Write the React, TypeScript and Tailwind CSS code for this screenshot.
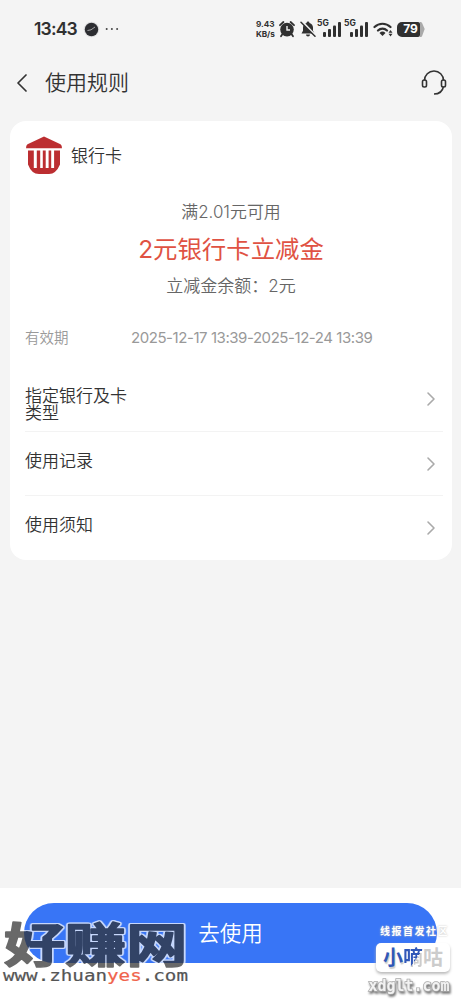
import { ChevronLeft, ChevronRight } from 'lucide-react'

const ROWS = [
  { label: '指定银行及卡类型', height: 'h-[65px]', pad: 'pt-3' },
  { label: '使用记录', height: 'h-16', pad: 'pb-[5px]' },
  { label: '使用须知', height: 'h-16', pad: 'pb-[5px]' },
]

function Signal() {
  return (
    <div className="relative h-[18px] w-[27px]">
      <span className="absolute left-[-1px] top-[-2px] text-[8.5px] font-bold leading-[10px]">5G</span>
      <svg className="absolute bottom-[1px] left-[5px]" width="19" height="16" fill="#303030">
        <rect x="0" y="11" width="3" height="5" rx="1" />
        <rect x="5" y="8" width="3" height="8" rx="1" />
        <rect x="10" y="4.5" width="3" height="11.5" rx="1" />
        <rect x="15" y="1" width="3" height="15" rx="1" />
      </svg>
    </div>
  )
}

function StatusBar() {
  return (
    <header className="flex h-[58px] items-center pl-[34px] pr-[36px] text-[#303030]">
      <span className="w-[49px] whitespace-nowrap text-[17.5px] font-semibold tracking-[-0.8px]">13:43</span>
      <svg width="17" height="17" viewBox="0 0 17 17">
        <circle cx="8.5" cy="8.5" r="7.8" fill="#dededf" />
        <circle cx="8.5" cy="8.5" r="6.7" fill="#2c2d31" />
        <path d="M4.5 9.5 8 8.8l4-2.8" fill="none" stroke="#c8c8c8" strokeWidth="0.8" />
      </svg>
      <svg className="ml-[5px]" width="15" height="4" fill="#444">
        <circle cx="1.7" cy="2" r="1" />
        <circle cx="6.9" cy="2" r="1" />
        <circle cx="12.1" cy="2" r="1" />
      </svg>
      <div className="ml-auto flex items-center">
        <div className="w-[24px] whitespace-nowrap text-[8.2px] font-bold leading-[10px]">
          <div>9.43</div>
          <div className="tracking-[-0.1px]">KB/s</div>
        </div>
        <svg className="-ml-px" width="16" height="18" viewBox="0 0 16 18">
          <path d="M1 5.2 4.4 2M15 5.2 11.6 2M3.5 14 2 16.2M12.5 14l1.5 2.2" stroke="#303030" strokeWidth="1.8" strokeLinecap="round" />
          <circle cx="8" cy="9.6" r="6.8" fill="#303030" />
          <path d="M8 6v4h3" fill="none" stroke="#f4f4f4" strokeWidth="1.4" />
        </svg>
        <svg className="ml-[5px]" width="16" height="18" viewBox="0 0 16 18">
          <path d="M8 1.6a1.5 1.5 0 0 1 1.5 1.3C11.8 3.6 13 5.5 13 7.6v3.2l1.5 2.7H1.5L3 10.8V7.6c0-2.1 1.2-4 3.5-4.7A1.5 1.5 0 0 1 8 1.6zM6 14.5h4a2 2 0 0 1-4 0z" fill="#303030" />
          <path d="M2 1.5 16 16" stroke="#f4f4f4" strokeWidth="2" />
          <path d="M1 2.2 15 16.2" stroke="#303030" strokeWidth="1.5" strokeLinecap="round" />
        </svg>
        <div className="ml-0.5 flex">
          <Signal />
          <Signal />
        </div>
        <svg className="ml-px" width="21" height="16" viewBox="0 0 21 16">
          <path d="M1.5 6a11.5 11.5 0 0 1 16 0M5 9.5a6.5 6.5 0 0 1 9 0" fill="none" stroke="#303030" strokeWidth="2.2" strokeLinecap="round" />
          <path d="m9.5 15-3-3a4.3 4.3 0 0 1 6 0z" fill="#303030" />
          <path d="m17.5 9 2 2.7h-4zM17.5 15.5l2-2.7h-4z" fill="#303030" />
        </svg>
        <div className="ml-[3px] flex items-center">
          <div className="flex h-[15px] w-[23px] items-center justify-center rounded-l-[5px] rounded-r-[2px] bg-[#303030] pl-1 text-[12px] font-bold leading-none text-white">
            79
          </div>
          <svg width="5" height="15" fill="#aaa">
            <path d="M0 0c1.5 0 2 .5 2.3 1.5L4.7 7 2.3 13.5C2 14.5 1.5 15 0 15z" />
          </svg>
        </div>
      </div>
    </header>
  )
}

function BankIcon() {
  return (
    <svg width="37" height="39" viewBox="0 0 37 39" fill="#bc2e31">
      <path d="M19 .5 35.500 8.300q1.500 1 1.500 4H1q0-3 1.500-4z" />
      <path d="M3 14.500h5.800V32h3V14.500h3.400V32h2.600V14.500h2.900V32h2.900V14.500h2.600V32h2.900V14.500H35v14Q31 38 24 38H14Q6.500 38 3 28.500z" />
    </svg>
  )
}

function SiteMark() {
  return (
    <svg className="absolute left-0 top-[26px]" width="196" height="78" fontFamily="Noto Sans CJK SC, sans-serif">
      <g transform="translate(4 48) scale(1.3 0.98)" opacity="0.72" fontWeight="700" fontSize="47" strokeLinejoin="round">
        <text
          x="0"
          y="0"
          fill="#303030"
          stroke="#303030"
          strokeWidth="1.6"
          className="[filter:drop-shadow(1px_0_0_#fff)_drop-shadow(-1px_0_0_#fff)_drop-shadow(0_1px_0_#fff)_drop-shadow(0_-1px_0_#fff)]"
        >
          好赚网
        </text>
      </g>
      <text x="3" y="67" textLength="185" lengthAdjust="spacingAndGlyphs" fontFamily="DejaVu Sans Mono, monospace" fontSize="15.5" fill="#555" stroke="#555" strokeWidth="0.2">
        www.zhuan<tspan fill="#f0644c" stroke="#f0644c">yes</tspan>.com
      </text>
    </svg>
  )
}

function ForumMark() {
  return (
    <div className="absolute left-[364px] top-[36px] w-[97px]">
      <div className="whitespace-nowrap pl-4 text-[10px] font-bold leading-[14px] tracking-[1.5px] text-white [text-shadow:0_0_2px_#bbb]">
        线报首发社区
      </div>
      <div className="ml-3 mt-[5px] flex h-[29px] w-[74px] items-center justify-center rounded-[5px] bg-white text-[20px] font-bold shadow-[0_2px_3px_#bbb]">
        <span className="text-[#3158b8] [text-shadow:1px_2px_1px_#ccc]">小</span>
        <span className="bg-[linear-gradient(125deg,#3158b8_58%,#cccccc_60%)] bg-clip-text text-transparent">嘀</span>
        <span className="text-[#cccccc]">咕</span>
      </div>
      <svg className="absolute left-0 top-[52px]" width="97" height="24" fontFamily="DejaVu Sans Mono, monospace" fontSize="15" fontWeight="700">
        <text
          x="4.5"
          y="14.5"
          textLength="81"
          lengthAdjust="spacingAndGlyphs"
          fill="#f2f2f2"
          stroke="#aaa"
          strokeWidth="1.5"
          paintOrder="stroke"
          className="[filter:drop-shadow(1px_2px_1px_#777)]"
        >
          xdglt.com
        </text>
      </svg>
    </div>
  )
}

export default function App() {
  return (
    <div className="flex h-[1000px] w-[461px] flex-col overflow-hidden bg-[#f4f4f4] font-[Inter,'Noto_Sans_CJK_SC',sans-serif] font-[350] text-[#333]">
      <StatusBar />
      <nav className="flex h-[50px] items-center pl-1.5 pr-3.5">
        <ChevronLeft size={32} strokeWidth={1.3} />
        <h1 className="ml-[7px] text-[21px] font-[350] leading-[30px]">使用规则</h1>
        <svg className="ml-auto" width="26" height="26" viewBox="0 0 26 26" fill="none" stroke="#333" strokeWidth="1.6">
          <path d="M3.5 10.5a9.5 9.5 0 0 1 19 0M22.500 16.500c-1 5-4.500 7.500-9.500 7.500" />
          <rect x="1.500" y="10" width="4" height="7" rx="1.700" />
          <rect x="20.500" y="10" width="4" height="7" rx="1.700" />
        </svg>
      </nav>

      <main className="ml-2.5 mr-[9px] mt-[13px] h-[439px] rounded-2xl bg-white">
        <div className="flex h-[69px] items-center pl-[15px]">
          <BankIcon />
          <span className="ml-[9px] text-[17px] leading-6">银行卡</span>
        </div>
        <div className="flex flex-col items-center pt-2.5">
          <p className="text-[16.9px] leading-6 text-[#666]">满2.01元可用</p>
          <p className="mt-[9px] text-[24.4px] font-normal leading-8 text-[#e05243]">2元银行卡立减金</p>
          <p className="mt-[9px] text-[17px] leading-6 text-[#666]">立减金余额：2元</p>
        </div>
        <div className="mt-7 flex h-6 items-center pl-[15px] text-[14.5px] text-[#999]">
          <span className="w-[106px]">有效期</span>
          <span className="whitespace-nowrap text-[15px] font-normal tracking-[-0.44px]">2025-12-17 13:39-2025-12-24 13:39</span>
        </div>
        <div className="ml-[15px] mr-[9px] mt-[17px] divide-y divide-[#f3f3f3]">
          {ROWS.map((row) => (
            <div key={row.label} className={`flex items-center justify-between ${row.height}`}>
              <span className={`w-[106px] text-[17px] leading-[17px] ${row.pad}`}>{row.label}</span>
              <ChevronRight size={24} strokeWidth={1.6} color="#aaa" />
            </div>
          ))}
        </div>
      </main>

      <footer className="relative mt-auto h-28 bg-white px-6 pt-[15px]">
        <button className="flex h-[60px] w-[413px] items-center justify-center rounded-full bg-[#3875f6] text-[21.5px] text-white">
          去使用
        </button>
        <SiteMark />
        <ForumMark />
      </footer>
    </div>
  )
}
